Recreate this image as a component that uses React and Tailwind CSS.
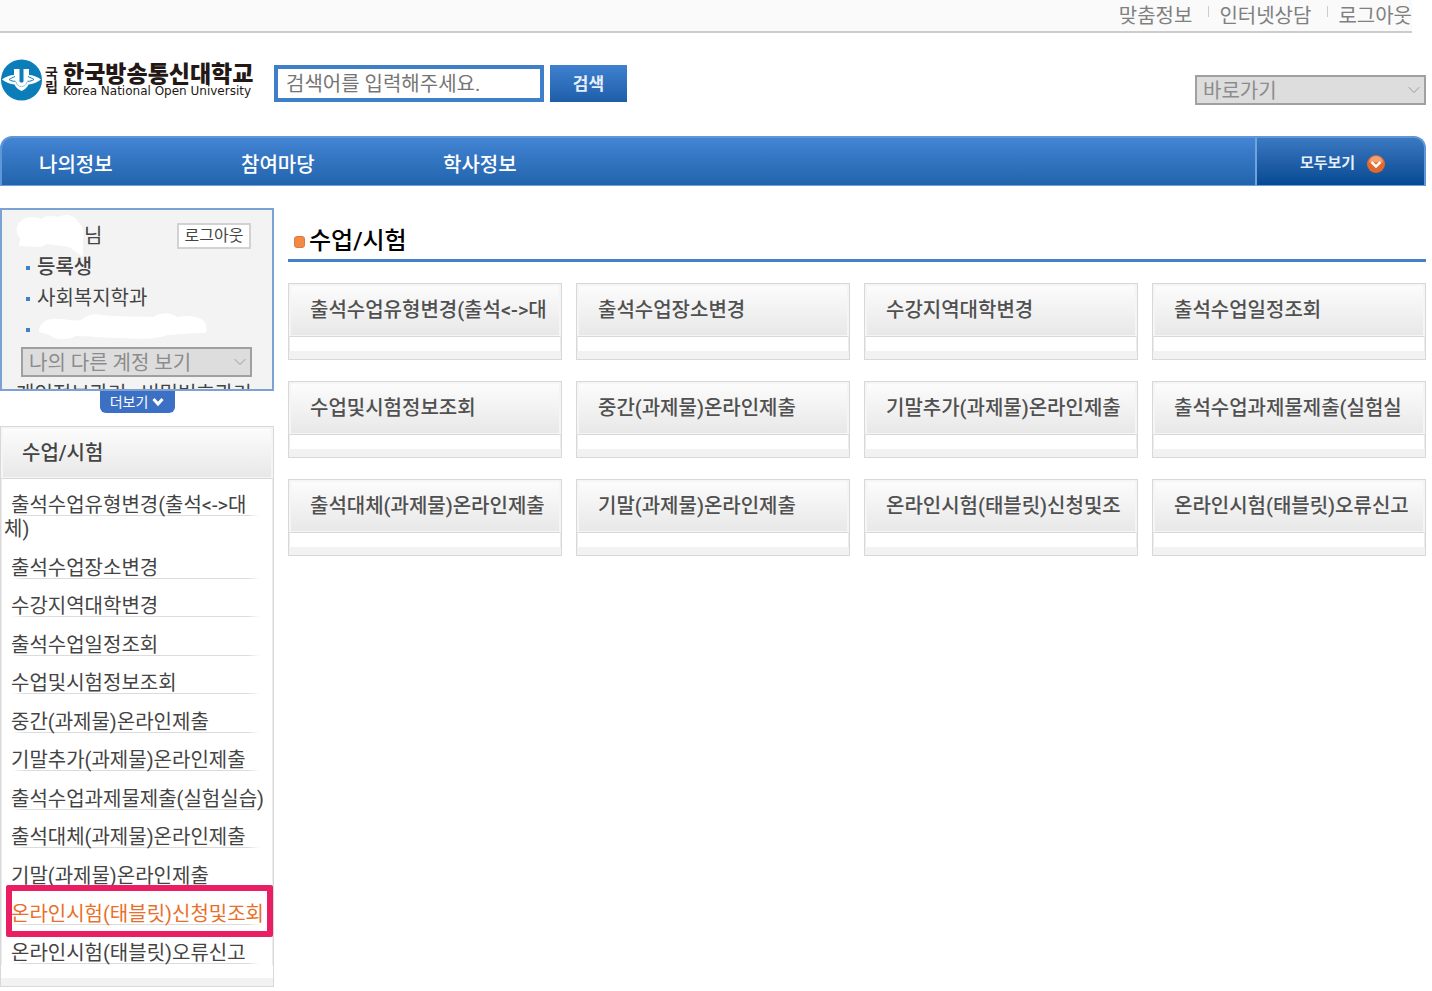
import React from 'react';
import { ChevronDown } from 'lucide-react';

const topLinks = ['맞춤정보', '인터넷상담', '로그아웃'];

const navItems = ['나의정보', '참여마당', '학사정보'];

const sideMenu = [
    { label: '출석수업유형변경(출석<->대체)' },
    { label: '출석수업장소변경' },
    { label: '수강지역대학변경' },
    { label: '출석수업일정조회' },
    { label: '수업및시험정보조회' },
    { label: '중간(과제물)온라인제출' },
    { label: '기말추가(과제물)온라인제출' },
    { label: '출석수업과제물제출(실험실습)' },
    { label: '출석대체(과제물)온라인제출' },
    { label: '기말(과제물)온라인제출' },
    { label: '온라인시험(태블릿)신청및조회', active: true },
    { label: '온라인시험(태블릿)오류신고' }
];

const cards = [
    '출석수업유형변경(출석<->대',
    '출석수업장소변경',
    '수강지역대학변경',
    '출석수업일정조회',
    '수업및시험정보조회',
    '중간(과제물)온라인제출',
    '기말추가(과제물)온라인제출',
    '출석수업과제물제출(실험실',
    '출석대체(과제물)온라인제출',
    '기말(과제물)온라인제출',
    '온라인시험(태블릿)신청및조',
    '온라인시험(태블릿)오류신고'
];

const Logo = () => (
    <a href="#" className="flex w-[253px] shrink-0 items-center text-[#231815]">
        <svg viewBox="0 0 42 42" className="h-[42px] w-[42px] shrink-0">
            <circle cx="21.500" cy="21" r="20.500" fill="#0b7db8" />
            <path
                d="M2 20.500C6 17.500 10 16.200 14 16V10h5.500v12c0 1 .8 1.600 2 1.600s2-.6 2-1.600V10H29v6c4 .2 8 1.500 12 4.500-4 3-8 4.600-12.500 5-1.200 3-3.500 5-7 6.500-3.500-1.500-5.800-3.500-7-6.500C10 25.100 6 23.500 2 20.500z"
                fill="#fff"
            />
            <path
                d="M15 17.500c-2.500 1.200-4.500 2-6 3 2 1.400 4 1.800 6.500 1.800M28 17.500c2.500 1.200 4.500 2 6 3-2 1.400-4 1.800-6.500 1.800"
                fill="none"
                stroke="#0b7db8"
                strokeWidth="1"
            />
            <path d="M16 23c.8 3 2.800 4.600 5.500 4.600S26.200 26 27 23" fill="none" stroke="#8cc3e0" strokeWidth="1" />
        </svg>
        <span className="ml-[3px] flex w-[18px] shrink-0 flex-col text-[14px] leading-[14px] font-bold">
            <span>국</span>
            <span>립</span>
        </span>
        <span className="flex flex-col whitespace-nowrap">
            <span className="text-[23px] leading-[22px] font-black">한국방송통신대학교</span>
            <span className="font-['DejaVu_Sans'] text-[12px] leading-[10px]">Korea National Open University</span>
        </span>
    </a>
);

const GraySelect = ({ label, className }) => (
    <div className={`relative ${className}`}>
        <select
            aria-label={label}
            disabled
            className="block h-[30px] w-full appearance-none border-2 border-[#a0a0a0] bg-[#dddddd] pt-[2px] pl-[6px] text-[20px] leading-[24px] text-[#8c8c8c] opacity-100"
        >
            <option>{label}</option>
        </select>
        <ChevronDown size={20} strokeWidth={1} className="absolute top-[5px] right-[2px] text-[#8c8c8c]" />
    </div>
);

const ProfileBox = () => (
    <section>
        <div className="relative h-[183px] overflow-hidden border-2 border-[#7ba2d3] bg-[#f3f3f3] px-[14px] pt-[10px] text-[#444]">
            <div className="flex items-center justify-between pr-[7px]">
                <span className="pl-[68px] leading-[32px]">님</span>
                <button className="h-[26px] w-[74px] border-2 border-[#d2d2d2] bg-white text-[16px] leading-[22px]">
                    로그아웃
                </button>
            </div>
            <ul className="pl-[10px] leading-[31px]">
                <li className="flex items-center gap-[7px] font-medium">
                    <span className="h-1 w-1 bg-[#3f81c6]"></span>등록생
                </li>
                <li className="flex items-center gap-[7px]">
                    <span className="h-1 w-1 bg-[#3f81c6]"></span>사회복지학과
                </li>
                <li className="flex h-[31px] items-center">
                    <span className="h-1 w-1 bg-[#3f81c6]"></span>
                </li>
            </ul>
            <GraySelect label="나의 다른 계정 보기" className="mt-[2px] ml-[5px] w-[231px]" />
            <p className="pt-[5px] leading-[24px] whitespace-nowrap">개인정보관리 : 비밀번호관리</p>
            <svg viewBox="0 0 220 130" className="absolute top-0 left-0 h-[130px] w-[220px]" fill="#fff">
                <path d="M17 36l1-8c-4-4-5-12 0-16 5-6 16-6 21-3 6-4 12-3 17-2 8-4 17-2 20 5 5 4 7 11 5 16v19l-14-10-22-3-7 3z" />
                <path d="M37 122c0-5 3-12 12-13 10-1 22 3 30 1 5-4 12-7 20-5 18 2 36 1 52 2 8-5 18-5 24 0 10-2 20-1 27 4 3 4 3 8 2 12-14 0-24 1-38 2-14 5-32 4-48 3-16 0-30-2-44-2-10 5-20 4-27-1z" />
            </svg>
        </div>
        <button className="mx-auto flex h-[22px] w-[75px] items-center justify-center gap-1 rounded-b-md bg-[#3b70c4] text-[14px] leading-[22px] text-white">
            더보기
            <svg viewBox="0 0 12 10" className="h-[10px] w-3" fill="none" stroke="currentColor" strokeWidth="3">
                <path d="M1.500 2L6 7l4.500-5" />
            </svg>
        </button>
    </section>
);

const SideMenu = () => (
    <section className="mt-[13px] border border-[#d8d8d8] text-[#444]">
        <h2 className="border-2 border-b border-[#f5f5f5] bg-gradient-to-b from-[#fcfcfc] to-[#e8e8e8] pl-[19px] leading-[48px] font-medium">
            수업/시험
        </h2>
        <ul className="flex h-[487px] flex-col justify-between border-x border-t border-[#ececec] border-t-[#d8d8d8] px-[2px] pt-[14px]">
            {sideMenu.map((item) => (
                <li
                    key={item.label}
                    className="relative bg-[linear-gradient(90deg,transparent,#dcdcdc_5%,#dcdcdc_95%,transparent)] bg-[length:248px_1px] bg-[position:8px_22px] bg-no-repeat indent-[7px] leading-[24px]"
                >
                    <a href="#" className={item.active ? 'text-[#e8702a]' : ''}>
                        {item.label}
                    </a>
                    {item.active && (
                        <span className="pointer-events-none absolute -top-[17px] right-[-3px] -bottom-[11px] left-[2px] rounded-xs border-6 border-[#e91e63]"></span>
                    )}
                </li>
            ))}
        </ul>
        <div className="mt-[13px] h-[8px] bg-[#f2f2f2]"></div>
    </section>
);

const Card = ({ title }) => (
    <a href="#" className="block overflow-hidden border border-[#d8d8d8] text-[#505050]">
        <div className="border-2 border-b border-[#f5f5f5] bg-gradient-to-b from-[#fcfcfc] to-[#e8e8e8] pl-[19px] leading-[49px] font-medium whitespace-nowrap">
            {title}
        </div>
        <div className="h-[15px] border-x border-t border-[#ececec] border-t-[#d8d8d8] bg-white"></div>
        <div className="h-[8px] bg-[#f2f2f2]"></div>
    </a>
);

const App = () => {
    return (
        <div className="bg-white pb-1 font-[Roboto,'Noto_Sans_CJK_KR',sans-serif] text-[20px]">
            <div className="mr-5 flex h-[33px] justify-end border-b-2 border-[#cccccc] bg-[#fafafa] text-[#808080]">
                {topLinks.map((link, i) => (
                    <a key={link} href="#" className="flex items-start leading-[32px]">
                        {i > 0 && <span className="mr-[10px] ml-4 mt-[6px] h-[11px] w-px bg-[#cccccc]"></span>}
                        {link}
                    </a>
                ))}
            </div>

            <div className="pr-[6px]">
                <header className="flex h-[103px] items-start pt-[26px]">
                    <Logo />
                    <form className="mt-[6px] ml-[21px] flex gap-[6px]">
                        <input
                            type="text"
                            aria-label="검색어"
                            placeholder="검색어를 입력해주세요."
                            className="h-[37px] w-[270px] border-4 border-[#3f7fc9] bg-white px-2 text-[20px] placeholder:text-[#757575]"
                        />
                        <button
                            type="button"
                            className="h-[37px] w-[77px] bg-gradient-to-b from-[#3f81cf] to-[#1e5ea9] pt-[2px] text-[17px] font-bold text-[#e6effa]"
                        >
                            검색
                        </button>
                    </form>
                    <GraySelect label="바로가기" className="mt-4 ml-auto w-[231px]" />
                </header>

                <nav className="flex h-[50px] overflow-hidden rounded-t-xl border-2 border-b border-[#5f97d8] border-b-[#6fa0d6] bg-gradient-to-b from-[#4384d4] to-[#2264ac] font-medium text-white">
                    {navItems.map((item) => (
                        <a key={item} href="#" className="w-[202px] pl-[37px] leading-[55px]">
                            {item}
                        </a>
                    ))}
                    <button className="ml-auto flex w-[169px] items-center justify-center gap-3 border-l-2 border-[#6fa3de] bg-gradient-to-b from-[#3a78c2] to-[#034a92] pt-1 pl-1 text-[15px] font-bold text-[#e6effa]">
                        모두보기
                        <svg viewBox="0 0 18 18" className="h-[18px] w-[18px]">
                            <circle cx="9" cy="9" r="9" fill="#e0692c" />
                            <path d="M2 7.500a7 6.500 0 0 1 14 0" fill="#f0a072" />
                            <path d="M4.500 7.200L9 11.500l4.500-4.300" fill="none" stroke="#fff" strokeWidth="2.500" />
                        </svg>
                    </button>
                </nav>

                <div className="flex items-start gap-[14px] pt-[22px]">
                    <aside className="w-[274px] shrink-0">
                        <ProfileBox />
                        <SideMenu />
                    </aside>

                    <main className="min-w-0 flex-1">
                        <h1 className="flex items-center gap-1 border-b-3 border-[#4482c6] pt-4 pl-[6px] text-[24px] leading-[35px] font-medium text-black">
                            <span className="h-3 w-[11px] rounded-[3px] border border-[#e07a3c] bg-[#f08a45]"></span>
                            수업/시험
                        </h1>
                        <div className="mt-[21px] grid grid-cols-4 gap-x-[14px] gap-y-[21px]">
                            {cards.map((title) => (
                                <Card key={title} title={title} />
                            ))}
                        </div>
                    </main>
                </div>
            </div>
        </div>
    );
};

export default App;
